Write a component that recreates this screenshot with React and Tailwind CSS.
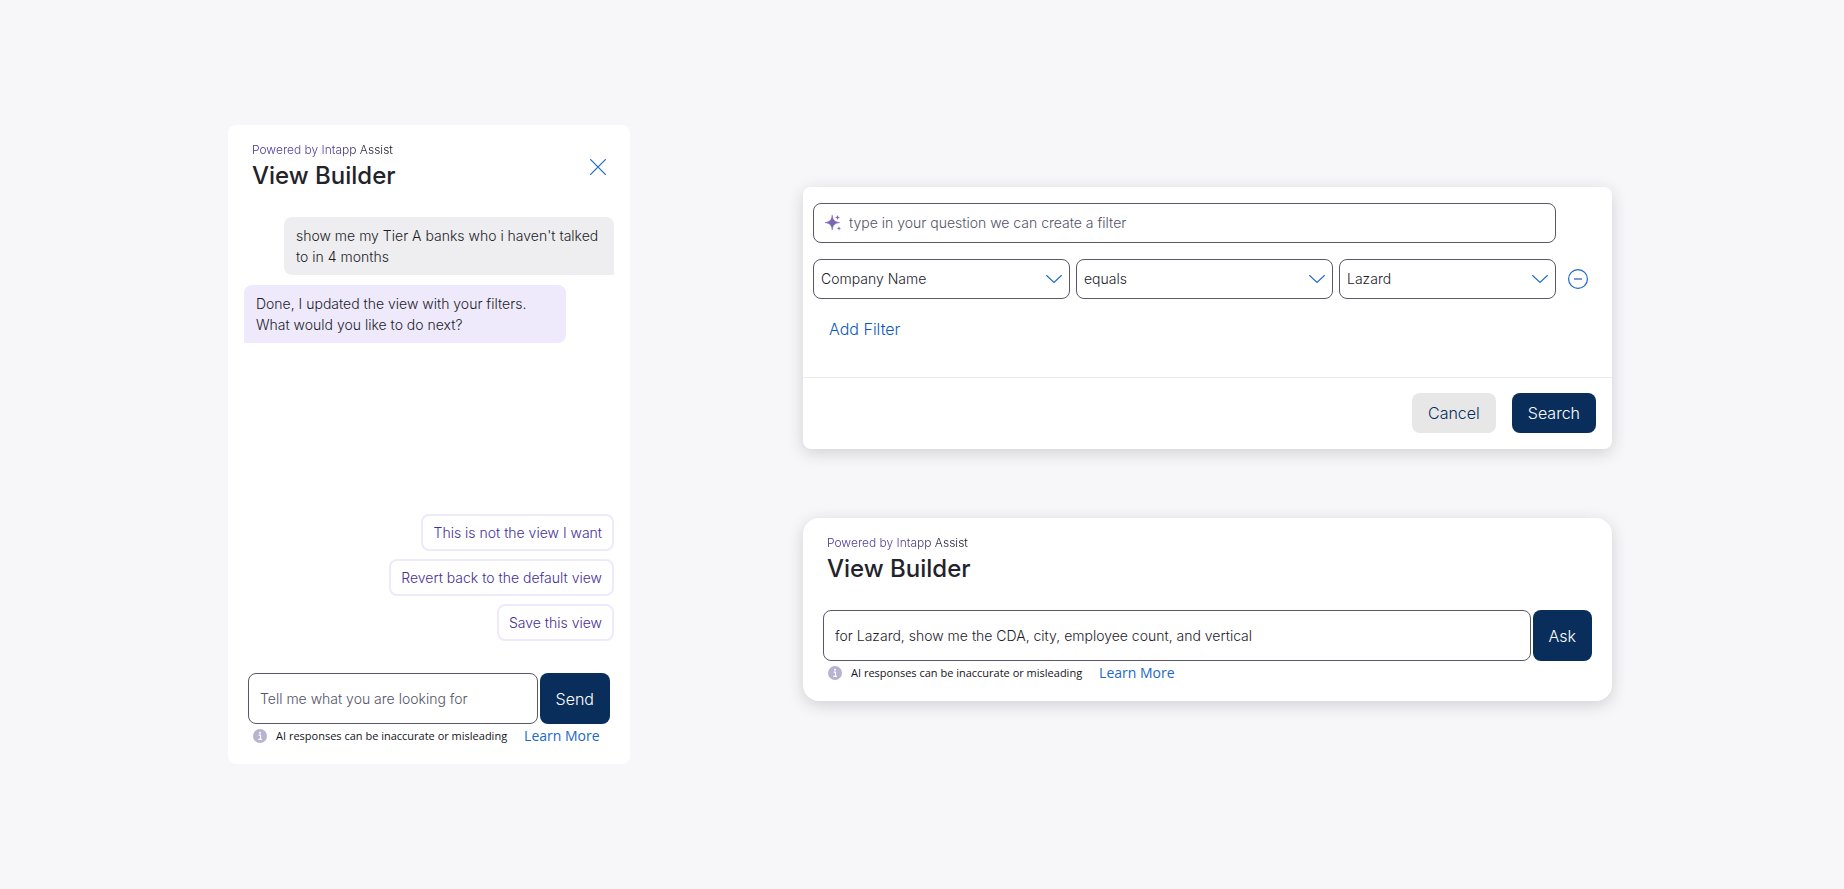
import React from 'react';

const suggestions = [
  'This is not the view I want',
  'Revert back to the default view',
  'Save this view',
];

const filterFields = [
  { id: 'filter-field', label: 'Field', value: 'Company Name' },
  { id: 'filter-operator', label: 'Operator', value: 'equals' },
  { id: 'filter-value', label: 'Value', value: 'Lazard' },
];

const CloseIcon = () => (
  <svg className="h-4 w-4" viewBox="0 0 16 16" fill="none" stroke="currentColor" strokeWidth="1.2" aria-hidden="true">
    <path d="M0.2 0.2 15.8 15.8M15.8 0.2 0.2 15.8" />
  </svg>
);

const ChevronIcon = () => (
  <svg
    className="pointer-events-none absolute top-1/2 right-2 h-2 w-4 -translate-y-1/2 text-[#1c68c9]"
    viewBox="0 0 16 8"
    fill="none"
    stroke="currentColor"
    strokeWidth="1.2"
    aria-hidden="true"
  >
    <path d="M0.3 0.2 8 7.4 15.7 0.2" />
  </svg>
);

const MinusIcon = () => (
  <svg className="h-5 w-5" viewBox="0 0 20 20" fill="none" stroke="currentColor" aria-hidden="true">
    <circle cx="10" cy="10" r="9.4" strokeWidth="1.2" />
    <path d="M6 10h8" stroke="#6f8ed6" strokeWidth="1.8" />
  </svg>
);

const SparkleIcon = () => (
  <svg className="h-4 w-4 shrink-0" viewBox="0 0 16 16" aria-hidden="true">
    <path
      d="M7.2 0.2C7.7 4.6 9.2 6.9 14.6 7.6 9.2 8.3 7.7 10.6 7.2 15 6.7 10.6 5.2 8.3 0 7.6 5.2 6.9 6.7 4.6 7.2 0.2Z"
      fill="#7a64b8"
      stroke="#7a64b8"
      strokeWidth="0.6"
    />
    <path d="M12.5 0.1 13.2 1.8 15 2.5 13.2 3.2 12.5 4.9 11.8 3.2 10 2.5 11.8 1.8Z" fill="#8a63b4" />
    <path d="M14 11.2 14.6 12.8 16 13.4 14.6 14 14 15.7 13.4 14 11.8 13.4 13.4 12.8Z" fill="#6a78cc" />
  </svg>
);

const InfoIcon = () => (
  <svg className="h-3.5 w-3.5 shrink-0" viewBox="0 0 14 14" aria-hidden="true">
    <circle cx="7" cy="7" r="7" fill="#b7b4d2" />
    <circle cx="7" cy="3.8" r="1" fill="#fff" />
    <path d="M5.6 6.1h1.9v4.2M5.3 10.4h3.6" stroke="#fff" strokeWidth="1.1" fill="none" />
  </svg>
);

const CardHeader = ({ children }) => (
  <header className="flex items-center justify-between px-6 pt-4">
    <div>
      <p className="w-fit bg-linear-to-r from-[#3b2f9c] via-[#573f9c] to-[#16161c] bg-clip-text text-xs leading-[18px] text-transparent">
        Powered by Intapp Assist
      </p>
      <h2 className="text-2xl leading-[34px] font-medium text-[#23232b]">View Builder</h2>
    </div>
    {children}
  </header>
);

const PromptForm = ({ label, action, ...inputProps }) => (
  <form className="flex gap-0.5" onSubmit={(e) => e.preventDefault()}>
    <input
      type="text"
      aria-label={label}
      className="h-[51px] min-w-0 flex-1 rounded-lg border border-[#5a576b] bg-white px-[11px] text-sm text-[#1d1c2a] placeholder:text-[#545266]"
      {...inputProps}
    />
    <button type="submit" className="rounded-lg bg-[#0a2e5c] px-4 text-base text-white">
      {action}
    </button>
  </form>
);

const Disclaimer = () => (
  <div className="flex h-6 items-center px-[5px] font-['Open_Sans',sans-serif] font-normal">
    <InfoIcon />
    <p className="ml-[9px] text-[11px] whitespace-nowrap text-[#14141b]">AI responses can be inaccurate or misleading</p>
    <a href="#learn-more" className="ml-[17px] text-sm whitespace-nowrap text-[#1c68c9]">Learn More</a>
  </div>
);

const ChatPanel = () => (
  <section className="w-[402px] shrink-0 rounded-lg bg-white pb-4">
    <CardHeader>
      <button type="button" aria-label="Close" className="text-[#1c68c9]">
        <CloseIcon />
      </button>
    </CardHeader>

    <div className="mt-6 flex min-h-[424px] flex-col justify-between px-4">
      <div className="flex flex-col gap-2.5 text-sm leading-[21px] text-[#1d1c2a]">
        <p className="ml-10 rounded-t-lg rounded-bl-lg bg-[#eeeef0] px-3 py-2">
          show me my Tier A banks who i haven't talked to in 4 months
        </p>
        <p className="mr-12 rounded-t-lg rounded-br-lg bg-[#eeeafc] px-3 py-2">
          Done, I updated the view with your filters.
          <br />
          What would you like to do next?
        </p>
      </div>

      <div className="flex flex-col items-end gap-2">
        {suggestions.map((text) => (
          <button
            key={text}
            type="button"
            className="h-[37px] rounded-lg border-2 border-[#eeeafc] px-2.5 text-sm text-[#462f95]"
          >
            {text}
          </button>
        ))}
      </div>
    </div>

    <div className="mt-8 px-5">
      <PromptForm label="Message" action="Send" placeholder="Tell me what you are looking for" />
      <Disclaimer />
    </div>
  </section>
);

const FilterPanel = () => (
  <section className="rounded-lg bg-white shadow-[0_4px_16px_rgba(40,40,60,0.18)]">
    <div className="px-2.5 pt-4">
      <div className="mr-[46px] flex h-10 items-center gap-2 rounded-lg border border-[#5a576b] px-[11px]">
        <SparkleIcon />
        <input
          type="text"
          aria-label="Question"
          placeholder="type in your question we can create a filter"
          className="min-w-0 flex-1 text-sm outline-none placeholder:text-[#545266]"
        />
      </div>

      <div className="mt-4 flex items-center gap-3 pr-3.5">
        <div className="grid flex-1 grid-cols-[257fr_257fr_217fr] gap-1.5">
          {filterFields.map((field) => (
            <div key={field.id} className="relative">
              <select
                id={field.id}
                aria-label={field.label}
                defaultValue={field.value}
                className="h-10 w-full appearance-none rounded-lg border border-[#5a576b] bg-white px-[7px] text-sm text-[#1d1c2a]"
              >
                <option>{field.value}</option>
              </select>
              <ChevronIcon />
            </div>
          ))}
        </div>
        <button type="button" aria-label="Remove filter" className="text-[#1c68c9]">
          <MinusIcon />
        </button>
      </div>

      <button type="button" className="mt-[18px] mb-9 block px-4 text-base text-[#0c58bd]">
        Add Filter
      </button>
    </div>

    <footer className="flex justify-end gap-4 border-t border-[#ececee] px-4 pt-[15px] pb-4">
      <button type="button" className="h-10 rounded-lg bg-[#e7e7e8] px-4 text-base text-[#0a2e5c]">Cancel</button>
      <button type="button" className="h-10 rounded-lg bg-[#0a2e5c] px-4 text-base text-white">Search</button>
    </footer>
  </section>
);

const AskPanel = () => (
  <section className="rounded-2xl bg-white pb-4 shadow-[0_4px_16px_rgba(40,40,60,0.18)]">
    <CardHeader />
    <div className="mt-6 px-5">
      <PromptForm
        label="Question"
        action="Ask"
        defaultValue="for Lazard, show me the CDA, city, employee count, and vertical"
      />
      <Disclaimer />
    </div>
  </section>
);

export default function App() {
  return (
    <main className="flex min-h-screen items-center justify-center bg-[#f7f7f9] pr-1 font-['Inter',sans-serif] font-light">
      <div className="flex w-full max-w-[1384px] items-center gap-[173px]">
        <ChatPanel />
        <div className="flex min-w-0 flex-1 flex-col gap-[69px] pb-px">
          <FilterPanel />
          <AskPanel />
        </div>
      </div>
    </main>
  );
}
